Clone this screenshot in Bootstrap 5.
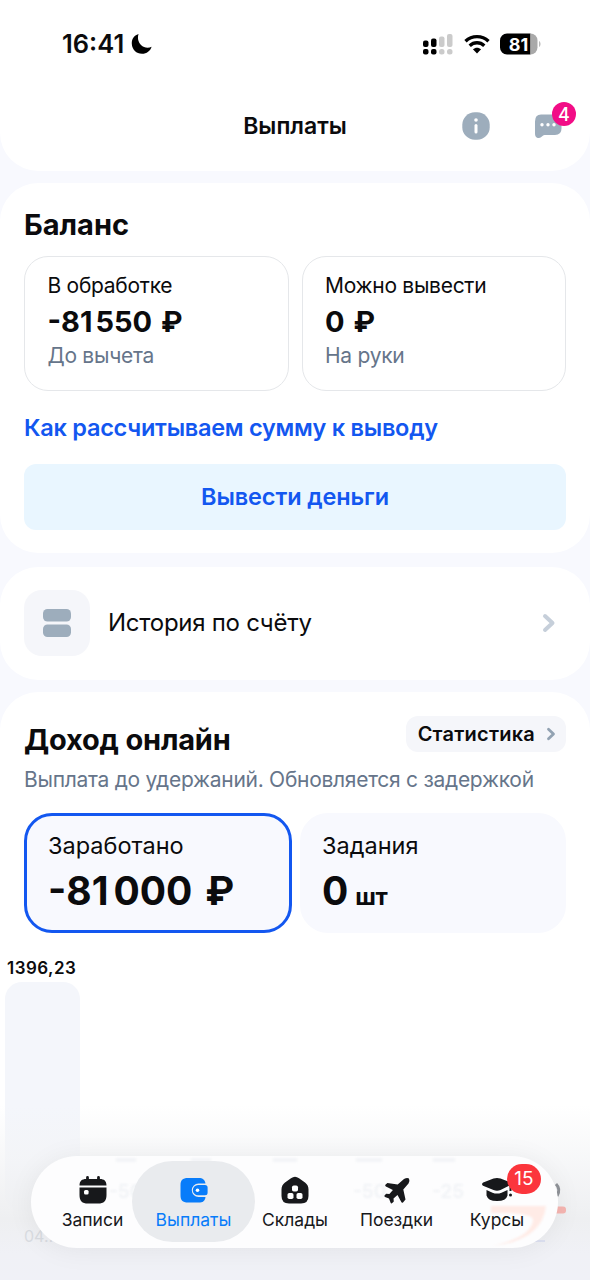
<!DOCTYPE html>
<html lang="ru">
<head>
<meta charset="utf-8">
<meta name="viewport" content="width=device-width, initial-scale=1">
<title>Выплаты</title>
<link href="https://cdn.jsdelivr.net/npm/bootstrap@5.3.0/dist/css/bootstrap.min.css" rel="stylesheet">
<style>
  body { font-family: Inter, "Liberation Sans", sans-serif; background: #f8f9fe; color: #0b0b0d; width: 590px; height: 1280px; overflow: hidden; position: relative; white-space: nowrap; }
  svg { display: block; flex: none; }
  .top-panel { height: 171px; border-radius: 0 0 38px 38px; }
  .status-row { height: 88px; padding: 0 49px 0 62px; }
  .clock { font-size: 25.5px; font-weight: 600; letter-spacing: 0; line-height: 30px; width: 69px; }
  .title-row { height: 76px; }
  .page-title { font-size: 23px; font-weight: 600; }
  .panel { background: #fff; border-radius: 38px; padding: 0 24px; margin-top: 12px; }
  .h-panel { font-size: 29px; font-weight: 700; line-height: 36px; margin: 0; }
  .tile { height: 135px; border: 1.5px solid #e5e7ea; border-radius: 24px; padding: 15px 22.5px; }
  .t-label { font-size: 21px; line-height: 28px; letter-spacing: -.28px; }
  .t-sum { font-size: 29px; font-weight: 700; line-height: 36px; margin: 4px 0 2px; }
  .muted { color: #66758a; }
  .blue { color: #1357f0; font-weight: 600; font-size: 23.5px; letter-spacing: -.26px; }
  .btn-withdraw { height: 66px; background: #e9f6ff; border-radius: 12px; border: 0; padding: 0; letter-spacing: -.12px; }
  .hist-icon { width: 66px; height: 66px; border-radius: 18px; background: #f5f6fa; }
  .hist-label { font-size: 24px; letter-spacing: -.27px; margin-left: 18px; }
  .chip { height: 36px; background: #f5f6fa; border-radius: 12px; font-size: 20px; font-weight: 600; letter-spacing: .22px; padding: 0 9px 0 12px; }
  .stat { height: 120px; background: #f8f9fe; border-radius: 28px; padding: 15px 21px; border: 3px solid #f8f9fe; }
  .stat + .stat { padding-left: 19px; }
  .stat.selected { border-color: #1357f0; }
  .s-label { font-size: 23.5px; line-height: 30px; }
  .s-sum { font-size: 39px; font-weight: 700; line-height: 44px; margin-top: 8px; }
  .sp { display: inline-block; }
  .chart { margin: 23px -24px 0; padding-left: 5px; }
  .bar-label { font-size: 17px; font-weight: 600; letter-spacing: .45px; line-height: 24px; padding-left: 2px; }
  .bar-col { width: 75px; height: 230px; background: #f4f6fb; border-radius: 17px; margin-top: 2px; }
  .fade-out { position: absolute; left: 0; right: 0; bottom: 0; height: 175px; background: linear-gradient(#f3f4f600, #f3f4f6aa 30%, #eeeff1 65%, #f0f1f6 85%, #f0f1f7); }
  .day { position: absolute; left: 24px; top: 1224px; font-size: 16px; color: #d9dce1; }
  .peek { position: absolute; left: 470px; top: 1168px; width: 97px; height: 84px; }
  .tabbar { position: absolute; left: 31px; top: 1156px; width: 527px; height: 92px; border-radius: 46px; background: #fdfdfe; box-shadow: 0 2px 28px #0000000f; overflow: hidden; }
  .tab { position: relative; height: 81px; padding-top: 15px; border-radius: 41px; font-size: 17.5px; line-height: 24px; color: #17181b; }
  .tab svg { margin: 0 auto 4px; }
  .tab.on { background: #e9ebee; color: #087cfa; }
  .ghost { position: absolute; font-size: 19px; font-weight: 600; color: #f1f3f6; filter: blur(1px); }
  .count { position: absolute; color: #fff; display: flex; align-items: center; justify-content: center; }
  .count-msg { right: -14px; top: -11px; width: 24px; height: 24px; border-radius: 12px; background: #f20d86; font-size: 18px; font-weight: 500; }
  .count-tab { left: 507px; top: 1164px; width: 34px; height: 30px; border-radius: 15px; background: #fb353c; font-size: 19px; }
</style>
</head>
<body>
<header class="top-panel bg-white">
  <div class="status-row d-flex align-items-center">
    <div class="clock">16:41</div>
    <svg width="21" height="22" viewBox="0 0 21 22"><path d="M7.600 1C2.800 2.500.6 6 .8 10.700c.3 6 4.600 10 10.200 10 4.700 0 8.300-2.700 9.600-7C17.500 15.300 13 15 10 12 7 9 6.300 4.500 7.600 1Z"/></svg>
    <svg class="ms-auto" width="30" height="21" viewBox="0 0 30 21"><rect y="6.500" width="5.500" height="6.500" rx="2"/><rect x="8" y="4.500" width="5.500" height="8.500" rx="2"/><rect y="15" width="5.500" height="5.500" rx="2"/><rect x="8" y="15" width="5.500" height="5.500" rx="2"/><g fill="#cbcbcb"><rect x="16" y="2.500" width="5.500" height="10.500" rx="2"/><rect x="24" width="5.500" height="13" rx="2"/><rect x="16" y="15" width="5.500" height="5.500" rx="2.500"/><rect x="24" y="15" width="5.500" height="5.500" rx="2.500"/></g></svg>
    <svg style="margin-left:11px" width="26" height="20" viewBox="0 0 26 20"><path d="M1.500 7.200C8 1.100 18 1.100 24.500 7.200M5.700 11.700c4.300-3.900 10.300-3.900 14.600 0" fill="none" stroke="#000" stroke-width="3.400"/><path d="M8.900 15.300c2.500-2.100 5.700-2.100 8.200 0L13 19.600Z"/></svg>
    <svg style="margin-left:10px" width="41" height="22" viewBox="0 0 41 22"><path d="M7 .5h23.500v21H7a7 7 0 0 1-7-7v-7a7 7 0 0 1 7-7Z"/><path d="M30.500.5a7 7 0 0 1 7 7v7a7 7 0 0 1-7 7Z" fill="#a9a9a9"/><path d="M39 8c2 1 2 5 0 6Z" fill="#bbb"/><text x="18.500" y="17.500" fill="#fff" text-anchor="middle" font-size="18" font-weight="700">81</text></svg>
  </div>
  <div class="title-row d-flex align-items-center position-relative justify-content-center">
    <span class="page-title">Выплаты</span>
    <div class="position-absolute end-0 d-flex align-items-center" style="padding-right:28px;gap:44px">
      <svg width="28" height="28" viewBox="0 0 28 28"><rect x=".3" y=".3" width="27.400" height="27.400" rx="12.500" fill="#9dadbc"/><circle cx="14" cy="8" r="1.800" fill="#fff"/><path d="M14 13.500v6.500" stroke="#fff" stroke-width="3" stroke-linecap="round"/></svg>
      <div class="position-relative">
        <svg width="28" height="26" viewBox="0 0 28 26"><path d="M7 1.500h14q6.500 0 6.500 7v7q0 6.500-6.500 6.500H10.500c-2 0-3 3-5.500 3-3 0-4-1.500-4-5V8.500q0-7 6-7Z" fill="#9dadbc"/><g fill="#fff"><circle cx="8" cy="11.800" r="1.700"/><circle cx="14" cy="11.800" r="1.700"/><circle cx="20" cy="11.800" r="1.700"/></g></svg>
        <span class="count count-msg">4</span>
      </div>
    </div>
  </div>
</header>

<main>
  <section class="panel" style="height:370px;padding-top:24px">
    <h2 class="h-panel">Баланс</h2>
    <div class="d-flex" style="gap:13px;margin-top:13px">
      <div class="tile flex-fill w-50">
        <div class="t-label">В обработке</div>
        <div class="t-sum">-81<span class="sp" style="width:3px"></span>550<span class="sp" style="width:9px"></span>₽</div>
        <div class="t-label muted">До вычета</div>
      </div>
      <div class="tile flex-fill w-50">
        <div class="t-label">Можно вывести</div>
        <div class="t-sum">0<span class="sp" style="width:9px"></span>₽</div>
        <div class="t-label muted">На руки</div>
      </div>
    </div>
    <div style="height:73px;line-height:73px"><a href="#" class="blue text-decoration-none">Как рассчитываем сумму к выводу</a></div>
    <button class="btn btn-withdraw blue w-100">Вывести деньги</button>
  </section>

  <section class="panel d-flex align-items-center" style="height:113px;margin-top:14px;padding-bottom:2px">
    <div class="hist-icon d-flex align-items-center justify-content-center">
      <svg width="28" height="28" viewBox="0 0 28 28" fill="#9dadbc"><rect width="28" height="12.500" rx="4.500"/><rect y="15.500" width="28" height="12.500" rx="4.500"/></svg>
    </div>
    <span class="hist-label">История по счёту</span>
    <svg class="ms-auto" style="margin-right:9px" width="15" height="20" viewBox="0 0 15 20"><path d="m3 3 7.500 7L3 17" fill="none" stroke="#c6cfda" stroke-width="4" stroke-linecap="round" stroke-linejoin="round"/></svg>
  </section>

  <section class="panel" style="height:620px;padding-top:24px">
    <div class="d-flex justify-content-between">
      <h2 class="h-panel" style="margin-top:6px;letter-spacing:-.2px">Доход онлайн</h2>
      <a href="#" class="chip d-flex align-items-center text-decoration-none text-reset">Статистика
        <svg style="margin-left:11px" width="11" height="14" viewBox="0 0 11 14"><path d="m2.500 2.200 5 4.800-5 4.800" fill="none" stroke="#92a2b2" stroke-width="2.800" stroke-linecap="round" stroke-linejoin="round"/></svg></a>
    </div>
    <div class="t-label muted" style="margin-top:8px">Выплата до удержаний. Обновляется с задержкой</div>
    <div class="d-flex" style="gap:8px;margin-top:19px">
      <div class="stat selected" style="width:268px">
        <div class="s-label">Заработано</div>
        <div class="s-sum">-81<span class="sp" style="width:5px"></span>000<span class="sp" style="width:13px"></span>₽</div>
      </div>
      <div class="stat flex-fill">
        <div class="s-label">Задания</div>
        <div class="s-sum">0<span style="font-size:24px;margin-left:7px;letter-spacing:-.4px">шт</span></div>
      </div>
    </div>
    <div class="chart">
      <div class="bar-label">1396,23</div>
      <div class="bar-col"></div>
    </div>
  </section>
</main>

<div class="fade-out"></div>
<div class="day">04…</div>
<svg class="peek" viewBox="0 0 97 84"><path d="M86 16q5 5 1 12" fill="none" stroke="#8f9298" stroke-width="3"/><rect x="80" y="38.500" width="16" height="7" rx="3" fill="#f5b5b1"/><path d="M65 73h10" stroke="#ccd2ee"/></svg>

<nav class="tabbar">
  <span class="ghost" style="left:78px;top:22px">-50</span>
  <span class="ghost" style="left:322px;top:22px">-50</span>
  <span class="ghost" style="left:401px;top:22px">-25</span>
  <svg class="position-absolute" style="left:0;top:0;filter:blur(1px)" width="527" height="92" viewBox="0 0 527 92"><path d="M85 4h20M160 4h20M242 4h24M325 4h26M402 4h22" stroke="#f0f2f5" stroke-width="3"/><path d="M460 50h55q-4 35-55 40 40-8 42-26 0-8-42-7Z" fill="#ffebe6"/></svg>
  <div class="d-flex text-center position-relative" style="padding-top:5px">
    <div class="tab" style="width:101px;padding-left:22px">
      <svg width="28" height="28" viewBox="0 0 28 28" fill="#17181b"><path d="M.5 9.500C.5 5 3 3 7 3h14c4 0 6.500 2 6.500 6.500ZM.5 11.500h27V19c0 6-2.500 8.500-8.500 8.500H9C3 27.500.5 25 .5 19Z"/><path d="M8.500 1.500v4M19.500 1.500v4" stroke="#17181b" stroke-width="2.800" stroke-linecap="round"/><rect x="5" y="14" width="4.600" height="4.600" rx="1.500" fill="#fff"/></svg>
      Записи</div>
    <div class="tab on" style="width:123px">
      <svg width="28" height="28" viewBox="0 0 28 28"><path d="M8 2h10.500C23 2 25 4 25.500 7.500h-7a6.700 6.700 0 0 0 0 13.400h7C25 25 23 26.500 18.500 26.500H8C2.500 26.500.5 24.500.5 19V9.500C.5 4 2.500 2 8 2Z" fill="#087cfa"/><path d="M18 9h7q2.600 0 2.600 2.500v5.300q0 2.500-2.600 2.500h-7a5.100 5.100 0 0 1 0-10.300Z" fill="#087cfa"/><circle cx="17.500" cy="14.200" r="1.800" fill="#fff"/></svg>
      Выплаты</div>
    <div class="tab" style="width:80px">
      <svg width="28" height="28" viewBox="0 0 28 28"><path d="M10 2.200q4-3 8 0l6 4.300q3.500 2.500 3.500 7V20q0 7.500-7.500 7.500H8Q.5 27.500.5 20v-6.500q0-4.500 3.500-7Z" fill="#17181b"/><g fill="#fff"><rect x="11" y="9.500" width="6" height="6" rx="1.800"/><rect x="6.500" y="17" width="6" height="6" rx="1.800"/><rect x="15.500" y="17" width="6" height="6" rx="1.800"/></g></svg>
      Склады</div>
    <div class="tab" style="width:123px">
      <svg width="28" height="28" viewBox="0 0 28 28" fill="#17181b"><path d="M21 3q3-1.500 5-.5 1 2-.5 5l-5.200 6 2.200 10-2.500 3q-1.200.7-1.700-.5L14.500 19l-4 3.500.3 3L9 27.300q-1 .4-1.500-.8L6 22.500l-4-1.600q-1-.5-.5-1.400L3.200 17.800l3.200.3 3.500-4-7-3.600q-1.200-.8-.5-1.800l2-1.800 10.300 1.600Z"/></svg>
      Поездки</div>
    <div class="tab" style="width:78px">
      <svg width="32" height="28" viewBox="0 0 32 28" fill="#17181b"><path d="M12.500 2.500q3.500-1.200 7 0l9 3.500q3 1.500 0 3.500l-9 4.500q-3.500 1.500-7 0L2 9.800Q0 8 2.200 6.500ZM5.500 14l6 2.700q4.500 1.700 9 0l6-2.700v5.500q-1.300 5.500-10.500 5.500-9 0-10.500-5.500Z"/><path d="M29.500 9v6" stroke="#17181b" stroke-width="2"/><circle cx="29.500" cy="19" r="1.500"/></svg>
      Курсы</div>
  </div>
</nav>
<span class="count count-tab">15</span>
<script src="https://cdn.jsdelivr.net/npm/bootstrap@5.3.0/dist/js/bootstrap.bundle.min.js"></script>
</body>
</html>
